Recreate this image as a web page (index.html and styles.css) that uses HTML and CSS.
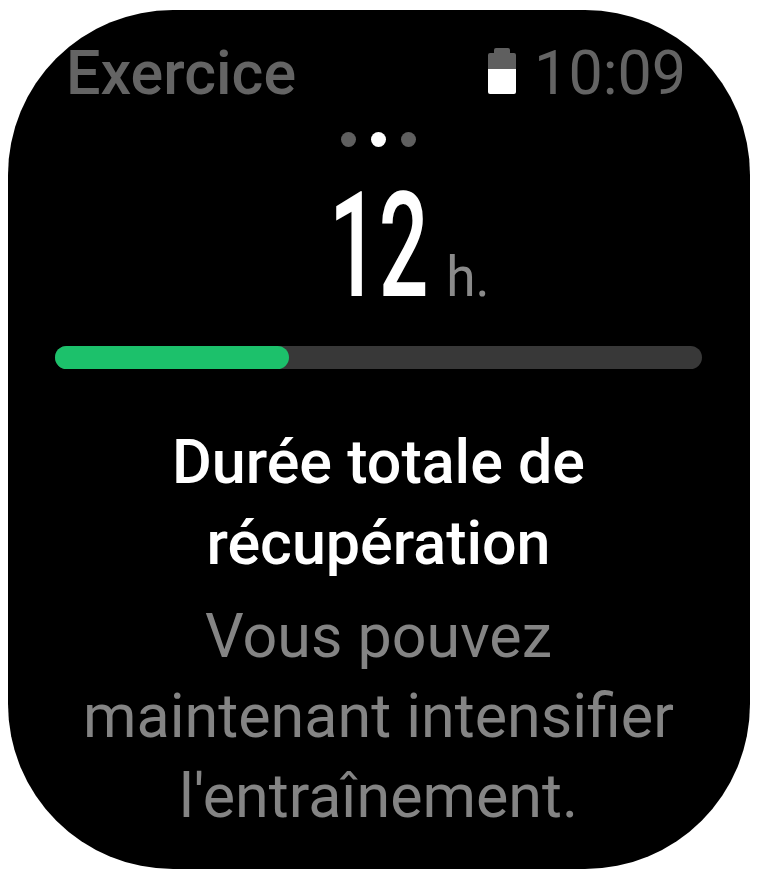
FILE: index.html
```html
<!DOCTYPE html>
<html lang="fr">

<head>
    <meta charset="UTF-8">
    <title>Exercice</title>
    <link rel="stylesheet" href="styles.css">
</head>

<body>
    <div class="watch">
        <div class="statusBar">
            <span class="appName">Exercice</span>
            <div class="clock">
                <svg class="battery" width="28" height="46" viewBox="0 0 28 46">
                    <path fill="#5f5f5f" d="M0 21V7q0-2 2-2h4V2q0-2 2-2h12q2 0 2 2v3h4q2 0 2 2v14z" />
                    <path fill="#fff" d="M0 21h28v23q0 2-2 2H2q-2 0-2-2z" />
                </svg>
                <span>10:09</span>
            </div>
        </div>

        <div class="dots">
            <span class="dot"></span>
            <span class="dot active"></span>
            <span class="dot"></span>
        </div>

        <div class="duration">
            <span class="hours">12</span>
            <span class="unit">h.</span>
        </div>

        <div class="progress">
            <div class="progressFill"></div>
        </div>

        <h1 class="title">Durée totale de<br>récupération</h1>
        <p class="desc">Vous pouvez<br>maintenant intensifier<br>l'entraînement.</p>
    </div>
</body>

</html>
```

FILE: styles.css
```css
body {
    margin: 0;
    background-color: white;
    font-family: 'Roboto', sans-serif;
}

.watch {
    box-sizing: border-box;
    width: 742px;
    height: 859px;
    margin: 10px 0 0 8px;
    padding: 30px 48px 0 47px;
    background-color: #000;
    border-radius: 165px;
    overflow: hidden;
}

.statusBar {
    display: flex;
    justify-content: space-between;
    align-items: center;
    height: 66px;
    padding: 0 16px 0 11px;
    font-size: 61px;
    font-weight: 500;
    color: #646464;
}

.clock {
    display: flex;
    align-items: center;
    gap: 18px;
    font-weight: 400;
}

.battery {
    margin-bottom: 4px;
}

.dots {
    display: flex;
    justify-content: center;
    gap: 15px;
    margin-top: 26px;
}

.dot {
    width: 15px;
    height: 15px;
    border-radius: 50%;
    background-color: #5f5f5f;
}

.dot.active {
    background-color: #fff;
}

.duration {
    display: flex;
    justify-content: center;
    align-items: baseline;
    height: 164px;
    line-height: 164px;
    margin-top: 18px;
    padding-left: 43px;
}

.hours {
    display: inline-block;
    width: 100px;
    font-size: 146px;
    font-weight: 500;
    text-align: center;
    color: #fff;
    transform: scaleX(0.6);
}

.unit {
    display: inline-block;
    width: 46px;
    margin-left: 36px;
    font-size: 56px;
    color: #8a8a8a;
    transform: scaleX(0.95);
}

.progress {
    height: 23px;
    margin-top: 17px;
    background-color: #383838;
    border-radius: 12px;
}

.progressFill {
    width: 234px;
    height: 100%;
    background-color: #1cc16b;
    border-radius: 12px;
}

.title {
    margin: 53px 0 0;
    font-size: 61px;
    font-weight: 500;
    line-height: 81px;
    text-align: center;
    color: #fff;
}

.desc {
    margin: 12px -30px 0;
    font-size: 61px;
    font-weight: 400;
    line-height: 80px;
    text-align: center;
    color: #848484;
}
```
